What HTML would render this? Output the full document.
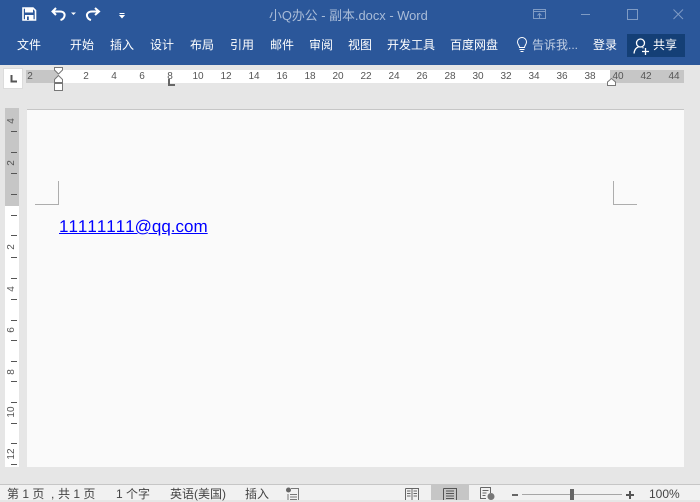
<!DOCTYPE html>
<html lang="zh">
<head>
<meta charset="utf-8">
<style>
html,body{margin:0;padding:0}
body{width:700px;height:500px;overflow:hidden;position:relative;background:#e6e6e6;font-family:"Liberation Sans","Noto Sans CJK SC",sans-serif}
.a{position:absolute}
.t{position:absolute;white-space:nowrap;line-height:16px}
.m{color:#fff;font-size:12px;top:37px;transform:translateX(-50%)}
.r{color:#555;font-size:10px;top:70px;line-height:14px;transform:translateX(-50%);font-kerning:none}
.v{position:absolute;left:12px;color:#555;font-size:10px;line-height:12px;transform:translate(-50%,-50%) rotate(-90deg);font-kerning:none}
.k{position:absolute;left:11px;width:6px;height:1px;background:#555}
.s{color:#444;font-size:12px;top:486px}
</style>
</head>
<body>
<div class="a" style="left:0;top:0;width:700px;height:65px;background:#2b579a"></div>

<svg class="a" style="left:0;top:0" width="140" height="30" viewBox="0 0 140 30">
<path d="M23 8H33L35.500 10.500V20H23Z" fill="none" stroke="#fff" stroke-width="1.600"/>
<rect x="25" y="8" width="8" height="4.500" fill="#fff"/>
<rect x="25" y="15" width="8.500" height="5" fill="#fff"/>
<rect x="27" y="16.500" width="1.800" height="3.500" fill="#2b579a"/>
<path d="M56 8L52.500 11.500L56 15M53 11.500H60C64 11.500 65 14 64.500 16C64 18 62.500 19.500 60.500 20" fill="none" stroke="#fff" stroke-width="2"/>
<path d="M71 12.500H76L73.500 15Z" fill="#fff"/>
<path d="M95 8L99 11.500L95 15M98.500 11.500H92C88 11.500 86.500 14 87 16C87.500 18 89 19.500 91 20" fill="none" stroke="#fff" stroke-width="2"/>
<path d="M119.500 13.500H124.500M120 15.500H124L122 17.800Z" fill="#fff" stroke="#fff" stroke-width="1"/>
</svg>

<div class="t" style="left:269px;top:8px;color:#a9bcd8;font-size:12.900px">小Q办公 - 副本.docx - Word</div>

<svg class="a" style="left:525px;top:0" width="175" height="30" viewBox="0 0 175 30">
<path d="M8.500 9.500H20.500V18.500H8.500ZM8.500 11.500H20.500M14.500 18V14M12.500 15.500L14.500 13.500L16.500 15.500" fill="none" stroke="#7f9bc4" stroke-width="1"/>
<path d="M56 14.500H65" stroke="#7f9bc4" stroke-width="1"/>
<path d="M148.500 9.500L158 19M158 9.500L148.500 19" stroke="#7f9bc4" stroke-width="1" fill="none"/>
</svg>
<div class="a" style="left:627px;top:9px;width:9px;height:9px;border:1px solid #7f9bc4"></div>

<div class="t m" style="left:29px">文件</div>
<div class="t m" style="left:82px">开始</div>
<div class="t m" style="left:122px">插入</div>
<div class="t m" style="left:162px">设计</div>
<div class="t m" style="left:202px">布局</div>
<div class="t m" style="left:242px">引用</div>
<div class="t m" style="left:282px">邮件</div>
<div class="t m" style="left:321px">审阅</div>
<div class="t m" style="left:360px">视图</div>
<div class="t m" style="left:411px">开发工具</div>
<div class="t m" style="left:474px">百度网盘</div>
<div class="t m" style="left:555px;color:#c3d0e4">告诉我...</div>
<div class="t m" style="left:605px">登录</div>

<svg class="a" style="left:514px;top:36px" width="16" height="18" viewBox="0 0 16 18">
<path d="M5.500 11.500C5.500 9.500 3.500 8.500 3.500 6A4.500 4.500 0 0 1 12.500 6C12.500 8.500 10.500 9.500 10.500 11.500ZM5.500 13.500H10.500M6.500 15.500H9.500" fill="none" stroke="#fff" stroke-width="1"/>
</svg>

<div class="a" style="left:627px;top:34px;width:58px;height:23px;background:#143f76"></div>
<svg class="a" style="left:632px;top:37px" width="20" height="18" viewBox="0 0 20 18">
<circle cx="8.500" cy="6" r="4" fill="none" stroke="#fff" stroke-width="1.300"/>
<path d="M2 16.500C2.500 12.500 4.500 10.500 6.500 10M10.500 10.500L11.500 11M10 14.500H17M13.500 11V18" fill="none" stroke="#fff" stroke-width="1.300"/>
</svg>
<div class="t" style="left:653px;top:37px;color:#fff;font-size:12px">共享</div>

<!-- horizontal ruler -->
<div class="a" style="left:4px;top:69px;width:18px;height:19px;background:#fff;box-shadow:0 0 0 1px #dcdcdc"></div>
<svg class="a" style="left:10px;top:74px" width="10" height="10"><path d="M1.500 1V7.500H7" fill="none" stroke="#555" stroke-width="2"/></svg>
<div class="a" style="left:26px;top:70px;width:658px;height:13px;background:#fff"></div>
<div class="a" style="left:26px;top:70px;width:32px;height:13px;background:#c6c6c6"></div>
<div class="a" style="left:610px;top:70px;width:74px;height:13px;background:#c6c6c6"></div>
<div class="t r" style="left:30px">2</div>
<div class="t r" style="left:86px">2</div>
<div class="t r" style="left:114px">4</div>
<div class="t r" style="left:142px">6</div>
<div class="t r" style="left:170px">8</div>
<div class="t r" style="left:198px">10</div>
<div class="t r" style="left:226px">12</div>
<div class="t r" style="left:254px">14</div>
<div class="t r" style="left:282px">16</div>
<div class="t r" style="left:310px">18</div>
<div class="t r" style="left:338px">20</div>
<div class="t r" style="left:366px">22</div>
<div class="t r" style="left:394px">24</div>
<div class="t r" style="left:422px">26</div>
<div class="t r" style="left:450px">28</div>
<div class="t r" style="left:478px">30</div>
<div class="t r" style="left:506px">32</div>
<div class="t r" style="left:534px">34</div>
<div class="t r" style="left:562px">36</div>
<div class="t r" style="left:590px">38</div>
<div class="t r" style="left:618px">40</div>
<div class="t r" style="left:646px">42</div>
<div class="t r" style="left:674px">44</div>

<svg class="a" style="left:52px;top:66px" width="14" height="26" viewBox="0 0 14 26">
<path d="M2.500 1.500H10.500V4L6.500 8L2.500 4Z" fill="#fff" stroke="#777"/>
<path d="M6.500 9.500L10.500 13.500V16.500H2.500V13.500Z" fill="#fff" stroke="#777"/>
<rect x="2.500" y="17.500" width="8" height="7" fill="#fff" stroke="#777"/>
</svg>
<svg class="a" style="left:606px;top:77px" width="12" height="10" viewBox="0 0 12 10">
<path d="M1.500 8.500V5L5.500 1.500L9.500 5V8.500Z" fill="#fff" stroke="#777"/>
</svg>
<svg class="a" style="left:168px;top:79px" width="8" height="7"><path d="M1 0V6H7" fill="none" stroke="#666" stroke-width="2"/></svg>

<!-- vertical ruler -->
<div class="a" style="left:5px;top:108px;width:14px;height:359px;background:#fff"></div>
<div class="a" style="left:5px;top:108px;width:14px;height:98px;background:#c6c6c6"></div>
<div class="v" style="top:121px">4</div>
<div class="k" style="top:131px"></div>
<div class="k" style="top:152px"></div>
<div class="v" style="top:163px">2</div>
<div class="k" style="top:173px"></div>
<div class="k" style="top:194px"></div>
<div class="k" style="top:215px"></div>
<div class="k" style="top:235px"></div>
<div class="v" style="top:247px">2</div>
<div class="k" style="top:257px"></div>
<div class="k" style="top:278px"></div>
<div class="v" style="top:289px">4</div>
<div class="k" style="top:299px"></div>
<div class="k" style="top:320px"></div>
<div class="v" style="top:330px">6</div>
<div class="k" style="top:340px"></div>
<div class="k" style="top:361px"></div>
<div class="v" style="top:372px">8</div>
<div class="k" style="top:381px"></div>
<div class="k" style="top:402px"></div>
<div class="v" style="top:412px">10</div>
<div class="k" style="top:423px"></div>
<div class="k" style="top:443px"></div>
<div class="v" style="top:454px">12</div>
<div class="k" style="top:464px"></div>

<!-- page -->
<div class="a" style="left:27px;top:109px;width:657px;height:358px;background:#fafafa;border-top:1px solid #c6c6c6;box-sizing:border-box"></div>
<div class="a" style="left:35px;top:181px;width:23px;height:23px;border-right:1px solid #adadad;border-bottom:1px solid #adadad"></div>
<div class="a" style="left:613px;top:181px;width:23px;height:23px;border-left:1px solid #adadad;border-bottom:1px solid #adadad"></div>
<div class="t" style="left:59px;top:217px;line-height:20px;color:#0000ff;font-size:17px;text-rendering:geometricPrecision;font-kerning:none;text-decoration:underline">11111111@qq.com</div>

<!-- status bar -->
<div class="a" style="left:0;top:484px;width:700px;height:16px;background:#f1f1f1;border-top:1px solid #c6c6c6;box-sizing:border-box"></div>
<div class="t s" style="left:7px">第 1 页</div>
<div class="t s" style="left:51px">,</div>
<div class="t s" style="left:58px">共 1 页</div>
<div class="t s" style="left:116px">1 个字</div>
<div class="t s" style="left:170px">英语(美国)</div>
<div class="t s" style="left:245px">插入</div>
<svg class="a" style="left:285px;top:487px" width="15" height="13" viewBox="0 0 15 13">
<circle cx="3.500" cy="3" r="2.500" fill="#666"/>
<path d="M6 1.500H13.500V13M3 7V13M5 7.500H12M5 10H12M5 12.500H12" fill="none" stroke="#777" stroke-width="1"/>
</svg>
<svg class="a" style="left:404px;top:487px" width="16" height="13" viewBox="0 0 16 13">
<path d="M1.500 1.500H14.500V13M1.500 1.500V13M8 1.500V13M3 4H6.500M3 6.500H6.500M3 9H6.500M9.500 4H13M9.500 6.500H13M9.500 9H13" fill="none" stroke="#666" stroke-width="1"/>
</svg>
<div class="a" style="left:431px;top:485px;width:38px;height:15px;background:#c6c6c6"></div>
<svg class="a" style="left:443px;top:487px" width="15" height="13" viewBox="0 0 15 13">
<path d="M.5 1.500H13.500V13M.5 1.500V13M3 4H11M3 6.500H11M3 9H11M3 11.500H11" fill="none" stroke="#555" stroke-width="1"/>
</svg>
<svg class="a" style="left:480px;top:487px" width="17" height="13" viewBox="0 0 17 13">
<path d="M.5 .5H10.500V6M.5 .5V11.500H6M2.500 3.500H8.500M2.500 6H6.500M2.500 8.500H5.500" fill="none" stroke="#666" stroke-width="1"/>
<circle cx="11" cy="9.500" r="3.500" fill="#777"/>
</svg>
<div class="a" style="left:512px;top:494px;width:6px;height:2px;background:#666"></div>
<div class="a" style="left:522px;top:494px;width:100px;height:1px;background:#a6a6a6"></div>
<div class="a" style="left:570px;top:489px;width:4px;height:11px;background:#666"></div>
<div class="a" style="left:626px;top:494px;width:8px;height:2px;background:#555"></div>
<div class="a" style="left:629px;top:491px;width:2px;height:8px;background:#555"></div>
<div class="t s" style="left:649px">100%</div>
</body>
</html>
